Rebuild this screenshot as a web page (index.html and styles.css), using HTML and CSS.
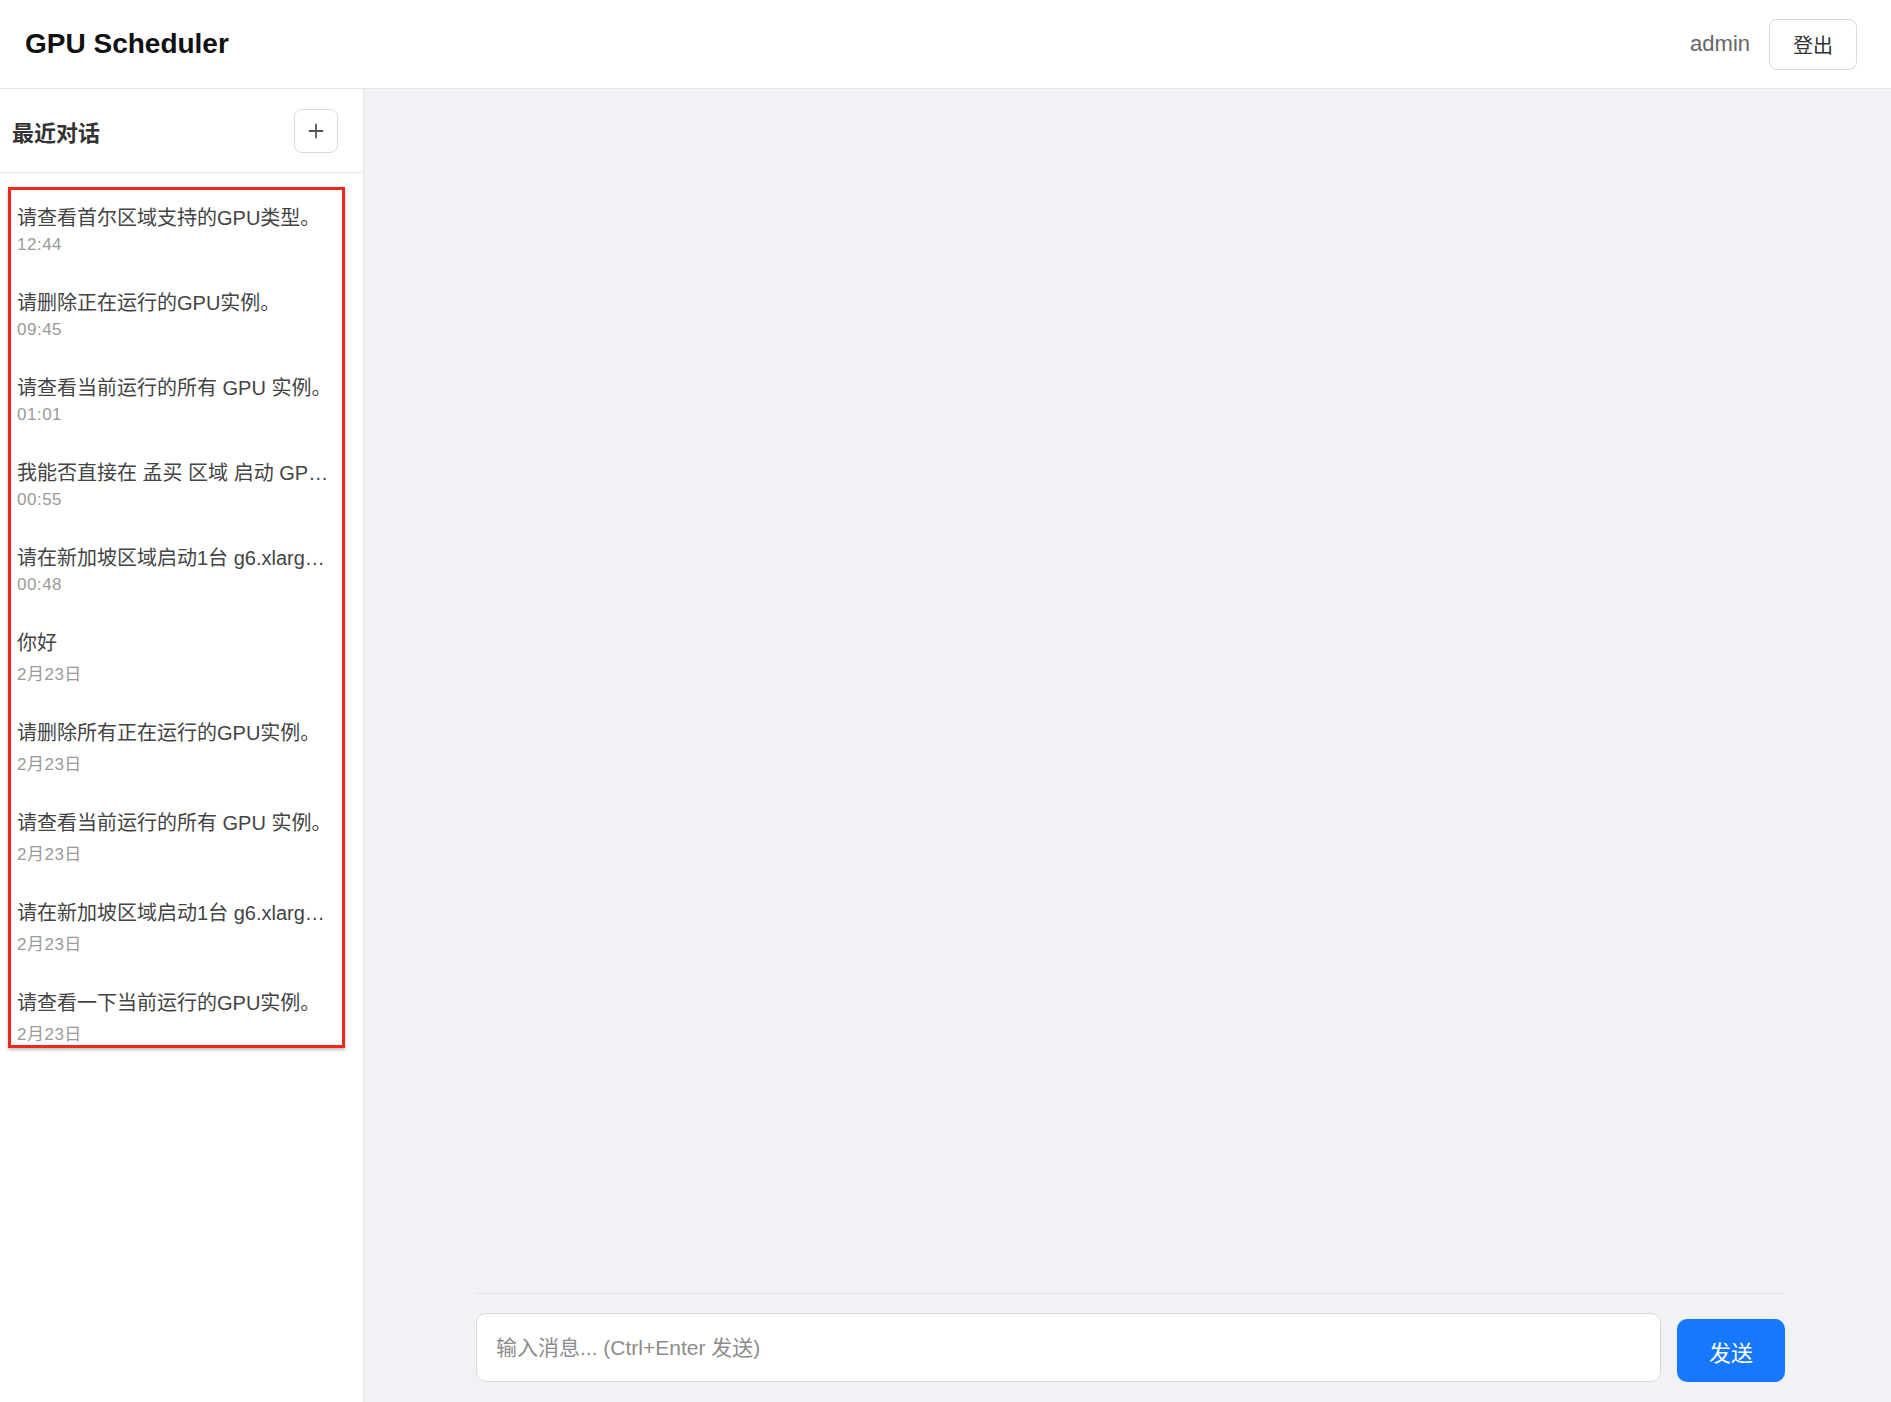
FILE: index.html
```html
<!DOCTYPE html>
<html>
<head>
<meta charset="utf-8">
<meta name="viewport" content="width=device-width, initial-scale=1">
<title>GPU Scheduler</title>
<link rel="stylesheet" href="styles.css">
</head>
<body>

<header class="topbar">
  <h1 class="brand">GPU Scheduler</h1>
  <div class="user-box">
    <span class="username">admin</span>
    <button class="btn-logout">登出</button>
  </div>
</header>

<div class="layout">
  <aside class="sidebar">
    <div class="sidebar-head">
      <h2>最近对话</h2>
      <button class="btn-new" title="新对话">
        <svg width="16" height="16" viewBox="0 0 16 16"><path d="M8 1.5v13M1.5 8h13" stroke="#555" stroke-width="1.8" stroke-linecap="round"/></svg>
      </button>
    </div>
    <ul class="conv-list">
      <li class="conv-item"><div class="conv-title">请查看首尔区域支持的GPU类型。</div><div class="conv-time">12:44</div></li>
      <li class="conv-item"><div class="conv-title">请删除正在运行的GPU实例。</div><div class="conv-time">09:45</div></li>
      <li class="conv-item"><div class="conv-title">请查看当前运行的所有 GPU 实例。</div><div class="conv-time">01:01</div></li>
      <li class="conv-item"><div class="conv-title" title="我能否直接在 孟买 区域 启动 GPU 实例？">我能否直接在 孟买 区域 启动 GPU 实例？</div><div class="conv-time">00:55</div></li>
      <li class="conv-item"><div class="conv-title" title="请在新加坡区域启动1台 g6.xlarge 实例。">请在新加坡区域启动1台 g6.xlarge 实例。</div><div class="conv-time">00:48</div></li>
      <li class="conv-item"><div class="conv-title">你好</div><div class="conv-time">2月23日</div></li>
      <li class="conv-item"><div class="conv-title">请删除所有正在运行的GPU实例。</div><div class="conv-time">2月23日</div></li>
      <li class="conv-item"><div class="conv-title">请查看当前运行的所有 GPU 实例。</div><div class="conv-time">2月23日</div></li>
      <li class="conv-item"><div class="conv-title" title="请在新加坡区域启动1台 g6.xlarge 实例。">请在新加坡区域启动1台 g6.xlarge 实例。</div><div class="conv-time">2月23日</div></li>
      <li class="conv-item"><div class="conv-title">请查看一下当前运行的GPU实例。</div><div class="conv-time">2月23日</div></li>
    </ul>
  </aside>

  <main class="chat">
    <div class="messages"></div>
    <div class="composer">
      <textarea class="msg-input" placeholder="输入消息... (Ctrl+Enter 发送)"></textarea>
      <button class="btn-send">发送</button>
    </div>
  </main>
</div>

</body>
</html>
```

FILE: styles.css
```css
* {box-sizing: border-box}
html, body {height: 100%;}
body {
  margin: 0;
  font-family: "Liberation Sans", Arial, "Noto Sans CJK SC", sans-serif;
  color: #333;
  background-color: #f0f2f5;
  display: flex;
  flex-direction: column;
  overflow: hidden;
}
button {
  font-family: inherit;
  cursor: pointer;
}

/* top bar */
.topbar {
  height: 89px;
  flex-shrink: 0;
  background-color: #fff;
  border-bottom: 1px solid #e6e6e6;
  display: flex;
  align-items: center;
  justify-content: space-between;
  padding: 0 34px 0 25px;
}
.brand {
  margin: 0;
  font-size: 28px;
  font-weight: bold;
  color: #111;
}
.user-box {
  display: flex;
  align-items: center;
  gap: 19px;
}
.username {
  font-size: 22px;
  color: #666;
}
.btn-logout {
  width: 88px;
  height: 51px;
  background-color: #fff;
  border: 1px solid #d9d9d9;
  border-radius: 8px;
  font-size: 20px;
  color: #333;
}

/* body */
.layout {
  flex: 1;
  display: flex;
  min-height: 0;
}
.sidebar {
  width: 364px;
  flex-shrink: 0;
  background-color: #fff;
  border-right: 1px solid #e6e6e6;
}
.sidebar-head {
  height: 84px;
  border-bottom: 1px solid #e6e6e6;
  display: flex;
  align-items: center;
  justify-content: space-between;
  padding: 0 25px 0 12px;
}
.sidebar-head h2 {
  margin: 0;
  font-size: 22px;
  font-weight: bold;
  color: #333;
}
.btn-new {
  width: 44px;
  height: 44px;
  background-color: #fff;
  border: 1px solid #d9d9d9;
  border-radius: 8px;
  display: flex;
  align-items: center;
  justify-content: center;
  padding: 0;
}

.conv-list {
  list-style: none;
  margin: 14px 18px 0 8px;
  padding: 0 0 0 6px;
  border: 3px solid #f3261c;
  box-shadow: 0 2px 3px rgba(0, 0, 0, 0.25);
}
.conv-item {
  padding: 12px 10px 0 0;
  margin-bottom: 20px;
}
.conv-item:last-child {
  margin-bottom: 0;
}
.conv-title {
  font-size: 20px;
  color: #444;
  white-space: nowrap;
  overflow: hidden;
  text-overflow: ellipsis;
}
.conv-time {
  margin-top: 4px;
  font-size: 17px;
  letter-spacing: 0.5px;
  color: #9a9a9a;
}

/* chat */
.chat {
  flex: 1;
  display: flex;
  flex-direction: column;
  min-width: 0;
  padding-left: 6px;
}
.messages {
  flex: 1;
}
.composer {
  width: 100%;
  max-width: 1309px;
  margin: 0 auto;
  border-top: 1px solid #e2e3e7;
  padding: 19px 0 20px;
  display: flex;
  align-items: flex-end;
  gap: 16px;
}
.msg-input {
  flex: 1;
  height: 69px;
  resize: none;
  border: 1px solid #d9d9d9;
  border-radius: 10px;
  background-color: #fff;
  padding: 20px 19px;
  font-family: inherit;
  font-size: 21px;
  line-height: 27px;
  color: #333;
  outline: none;
}
.msg-input::placeholder {
  color: #8c8c8c;
}
.btn-send {
  width: 108px;
  height: 63px;
  border: none;
  border-radius: 10px;
  background-color: #1677ff;
  color: #fff;
  font-size: 22px;
}
```
